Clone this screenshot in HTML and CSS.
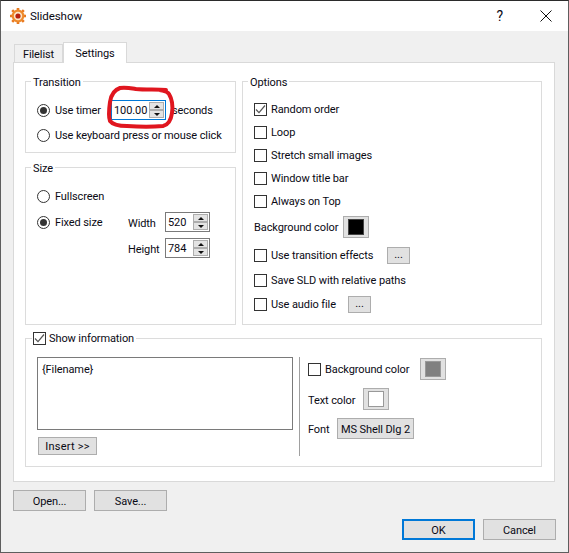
FILE: index.html
```html
<!DOCTYPE html>
<html lang="en">
<head>
<meta charset="utf-8">
<title>Slideshow</title>
<link rel="stylesheet" href="styles.css">
</head>
<body>
<div class="window">
  <header class="titlebar">
    <svg class="app-icon" width="18" height="18" viewBox="0 0 18 18"><path d="M9 1v3M3.2 3.2l2.2 2.2M14.8 3.2l-2.2 2.2M1 9h3M14 9h3M3.2 14.8l2.2-2.2M14.8 14.8l-2.2-2.2M9 14v3" stroke="#e8781e" stroke-width="2.6" fill="none"/><circle cx="9" cy="9" r="6.4" fill="#ee8a2c"/><circle cx="9" cy="9" r="4.2" fill="#fbe6c8"/><circle cx="9" cy="9" r="2.6" fill="#b8200f"/></svg>
    <span class="title">Slideshow</span>
    <span class="help">?</span>
    <svg class="close" width="12" height="12" viewBox="0 0 12 12"><path d="M.5.5l11 11M11.5.5l-11 11" stroke="#111" stroke-width="1" fill="none"/></svg>
  </header>
  <main class="client">
    <nav class="tabs">
      <span class="tab">Filelist</span>
      <span class="tab active">Settings</span>
    </nav>
    <section class="panel">
      <div class="columns">
        <div class="left-col">
          <fieldset class="group transition">
            <legend>Transition</legend>
            <div class="row timer-row">
              <span class="radio on"></span><span class="lbl timer-lbl">Use timer</span>
              <span class="spin focus"><span class="val">100.00</span><span class="arrows"><i class="up"></i><i class="down"></i></span></span>
              <span class="lbl">seconds</span>
            </div>
            <div class="row"><span class="radio"></span><span class="lbl">Use keyboard press or mouse click</span></div>
          </fieldset>
          <fieldset class="group size">
            <legend>Size</legend>
            <div class="size-grid">
              <div class="size-modes">
                <div class="row"><span class="radio"></span><span class="lbl">Fullscreen</span></div>
                <div class="row"><span class="radio on"></span><span class="lbl">Fixed size</span></div>
              </div>
              <div class="size-fields">
                <span class="lbl">Width</span>
                <span class="spin"><span class="val">520</span><span class="arrows"><i class="up"></i><i class="down"></i></span></span>
                <span class="lbl">Height</span>
                <span class="spin"><span class="val">784</span><span class="arrows"><i class="up"></i><i class="down"></i></span></span>
              </div>
            </div>
          </fieldset>
        </div>
        <fieldset class="group options">
          <legend>Options</legend>
          <div class="opt"><span class="check on"><svg width="13" height="13" viewBox="0 0 13 13"><path d="M2 6.5l3 3.2L11 2.5" stroke="#555" stroke-width="1.2" fill="none"/></svg></span><span class="lbl">Random order</span></div>
          <div class="opt"><span class="check"></span><span class="lbl">Loop</span></div>
          <div class="opt"><span class="check"></span><span class="lbl">Stretch small images</span></div>
          <div class="opt"><span class="check"></span><span class="lbl">Window title bar</span></div>
          <div class="opt"><span class="check"></span><span class="lbl">Always on Top</span></div>
          <div class="opt bg-row"><span class="lbl">Background color</span><span class="swatch black"><b></b></span></div>
          <div class="opt fx-row"><span class="check"></span><span class="lbl">Use transition effects</span><button class="btn dots">...</button></div>
          <div class="opt rel-row"><span class="check"></span><span class="lbl">Save SLD with relative paths</span></div>
          <div class="opt audio-row"><span class="check"></span><span class="lbl">Use audio file</span><button class="btn dots">...</button></div>
        </fieldset>
      </div>
      <fieldset class="group info">
        <legend><span class="check on"><svg width="13" height="13" viewBox="0 0 13 13"><path d="M2 6.5l3 3.2L11 2.5" stroke="#555" stroke-width="1.2" fill="none"/></svg></span><span class="lbl">Show information</span></legend>
        <div class="info-body">
          <div class="info-left">
            <div class="textarea">{Filename}</div>
            <button class="btn insert">Insert &gt;&gt;</button>
          </div>
          <div class="info-right">
            <div class="info-row first"><span class="check"></span><span class="lbl">Background color</span><span class="swatch gray"><b></b></span></div>
            <div class="info-row second"><span class="lbl">Text color</span><span class="swatch white"><b></b></span></div>
            <div class="info-row third"><span class="lbl">Font</span><button class="btn font">MS Shell Dlg 2</button></div>
          </div>
        </div>
      </fieldset>
    </section>
    <div class="file-actions">
      <button class="btn action">Open...</button>
      <button class="btn action">Save...</button>
    </div>
    <div class="dialog-actions">
      <button class="btn action default">OK</button>
      <button class="btn action">Cancel</button>
    </div>
  </main>
  <svg class="scribble" width="72" height="48" viewBox="105 83 72 48"><path d="M166 90C158 89 146 90 136 89 130 88 125 87 120 88 114 90 111 95 110 102 109 109 108 116 110 121 113 125 120 126 127 126 140 127 153 127 163 126 168 125 171 120 172 113 173 106 172 99 169 94 167 91 163 91 160 90" fill="none" stroke="#e0161f" stroke-width="4" stroke-linecap="round" stroke-linejoin="round"/></svg>
</div>
</body>
</html>
```
FILE: styles.css
```css
* { box-sizing: border-box; }
html, body { margin: 0; padding: 0; }
body {
  width: 569px;
  height: 553px;
  overflow: hidden;
  background: #f0f0f0;
  font-family: "Roboto", "Lato", sans-serif;
  font-size: 11px;
  letter-spacing: -0.1px;
  color: #0a0a14;
  white-space: nowrap;
}
.window {
  position: relative;
  width: 569px;
  height: 553px;
  border: 1px solid #5e5e5e;
  border-top-color: #2b2b2b;
  background: #f0f0f0;
  display: flex;
  flex-direction: column;
}
.titlebar {
  height: 30px;
  background: #fff;
  display: flex;
  align-items: center;
  padding-left: 8px;
  flex: none;
}
.title { margin-left: 3px; font-size: 11.6px; }
.help { margin-left: auto; font-size: 14px; margin-right: 37px; }
.close { margin-right: 16px; }
.client { flex: 1; padding: 11px 12px 0 12px; }
.tabs { display: flex; height: 20px; align-items: flex-end; padding-left: 1px; position: relative; z-index: 1; }
.tab {
  height: 18px;
  width: 49px;
  text-align: center;
  line-height: 19px;
  background: #f0f0f0;
  border: 1px solid #d9d9d9;
  border-bottom: 0;
}
.tab.active {
  height: 21px;
  width: 64px;
  background: #fff;
  margin-bottom: -1px;
  line-height: 21px;
}
.panel {
  width: 542px;
  height: 420px;
  background: #fff;
  border: 1px solid #d9d9d9;
  padding: 10px 11px 0 11px;
}
.columns { display: flex; gap: 6px; margin-bottom: 5px; }
.left-col { width: 211px; display: flex; flex-direction: column; gap: 6px; }
fieldset.group {
  margin: 0;
  padding: 0;
  border: 1px solid #dcdcdc;
  min-width: 0;
}
legend { margin-left: 5px; padding: 0 2px; line-height: 19px; height: 16px; }
.transition { height: 80px; }
.size { height: 166px; }
.row { display: flex; align-items: center; height: 18px; padding-left: 11px; }
.timer-row { margin-top: 10px; margin-bottom: 5px; height: 22px; }
.timer-lbl { width: 56px; }
.radio {
  width: 13px;
  height: 13px;
  border-radius: 50%;
  border: 1px solid #333;
  background: #fff;
  flex: none;
  position: relative;
  margin-right: 5px;
}
.radio.on::after {
  content: "";
  position: absolute;
  left: 2px;
  top: 2px;
  width: 7px;
  height: 7px;
  border-radius: 50%;
  background: #333;
}
.spin {
  display: flex;
  width: 45px;
  height: 20px;
  border: 1px solid #7a7a7a;
  background: #fff;
  align-items: center;
  justify-content: space-between;
  padding: 1px 1px 1px 2px;
}
.spin.focus { border-color: #0078d7; width: 55px; margin-right: 6px; }
.arrows { display: flex; flex-direction: column; width: 15px; height: 16px; flex: none; }
.arrows i {
  flex: 1;
  display: flex;
  align-items: center;
  justify-content: center;
  background: #e3e3e3;
  border: 1px solid #adadad;
}
.arrows i::after {
  content: "";
  border-left: 3px solid transparent;
  border-right: 3px solid transparent;
}
.arrows .up::after { border-bottom: 3px solid #111; }
.arrows .down::after { border-top: 3px solid #111; }
.size-grid { display: flex; }
.size-modes { width: 102px; display: flex; flex-direction: column; gap: 8px; margin-top: 12px; }
.size-fields {
  display: grid;
  grid-template-columns: 37px 45px;
  grid-auto-rows: 20px;
  row-gap: 6px;
  align-items: center;
  margin-top: 37px;
}
.size-fields > .lbl { padding-top: 2px; }
.options { width: 300px; height: 252px; }
.opt { display: flex; align-items: center; height: 18px; padding-left: 11px; margin-top: 5px; }
.opt:first-of-type { margin-top: 11px; }
.check {
  width: 13px;
  height: 13px;
  border: 1px solid #333;
  background: #fff;
  flex: none;
  display: inline-block;
  margin-right: 4px;
  position: relative;
}
.check svg { display: block; position: absolute; left: -1px; top: -1px; }
.bg-row { height: 22px; margin-top: 6px; }
.bg-row .lbl { width: 89px; }
.fx-row { margin-top: 8px; }
.fx-row .lbl { width: 116px; }
.rel-row { margin-top: 7px; }
.audio-row { margin-top: 6px; }
.audio-row .lbl { width: 77px; }
.swatch {
  width: 26px;
  height: 22px;
  border: 1px solid #adadad;
  background: #e1e1e1;
  display: flex;
  align-items: center;
  justify-content: center;
  flex: none;
}
.swatch b { display: block; width: 16px; height: 16px; border: 1px solid #999; }
.black b { background: #000; border-color: #444; }
.gray b { background: #808080; }
.white b { background: #fff; }
.btn {
  font: inherit;
  letter-spacing: inherit;
  color: inherit;
  background: #e1e1e1;
  border: 1px solid #adadad;
  padding: 0;
  border-radius: 0;
}
.dots { width: 23px; height: 17px; line-height: 14px; }
.info { width: 517px; height: 137px; }
.info legend { display: flex; align-items: center; margin-left: 6px; padding-left: 1px; }
.info legend .check { margin-right: 3px; }
.info legend .lbl { line-height: 16px; padding-top: 2px; }
.info-body { display: flex; margin-top: 11px; padding-left: 11px; }
.info-left { width: 256px; }
.textarea { height: 73px; border: 1px solid #7a7a7a; padding: 4px 4px; line-height: 16px; }
.insert { width: 59px; height: 18px; margin: 7px 0 0 1px; display: block; line-height: 14px; padding-top: 2px; letter-spacing: 0.25px; }
.info-right { width: 233px; margin-left: 6px; height: 99px; border-left: 1px solid #a0a0a0; padding-left: 8px; }
.info-row { display: flex; align-items: center; }
.first { height: 22px; margin-top: 1px; }
.first .lbl { width: 95px; }
.second { height: 22px; margin-top: 8px; }
.second .lbl { width: 55px; padding-top: 2px; }
.third { margin-top: 8px; }
.third .lbl { width: 29px; padding-top: 2px; }
.font { width: 77px; height: 21px; padding-top: 2px; }
.file-actions { display: flex; gap: 8px; margin-top: 8px; }
.action { width: 73px; height: 21px; padding-top: 1px; }
.dialog-actions { display: flex; justify-content: flex-end; gap: 8px; margin-top: 8px; }
.default { border: 2px solid #0078d7; }
.scribble { position: absolute; left: 104px; top: 82px; }
```
